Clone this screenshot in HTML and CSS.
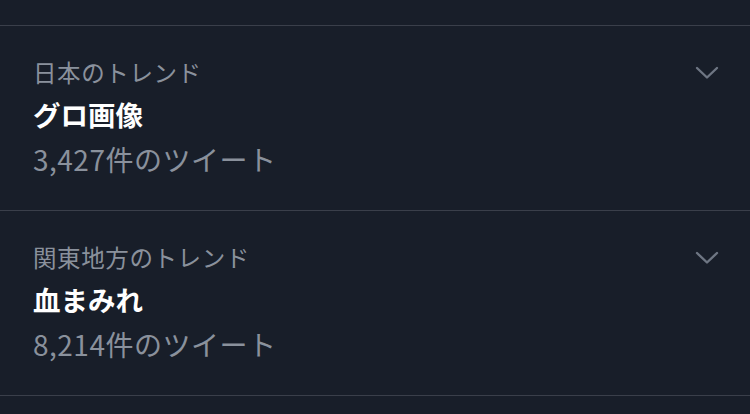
FILE: index.html
```html
<!DOCTYPE html>
<html lang="ja">
<head>
  <meta charset="UTF-8" />
  <meta name="viewport" content="width=device-width, initial-scale=1.0"/>
  <title>トレンド</title>
  <link rel="stylesheet" href="styles.css">
</head>
<body>

<div class="list">
  <div class="top-strip"></div>

  <!-- trend item -->
  <div class="trend">
    <div class="trend-text">
      <div class="trend-label">日本のトレンド</div>
      <div class="trend-title">グロ画像</div>
      <div class="trend-count">3,427件のツイート</div>
    </div>
    <svg class="chevron" width="24" height="14" viewBox="0 0 24 14">
      <polyline points="2,2 12,11.5 22,2" fill="none" stroke="#6e7683" stroke-width="2.4" stroke-linecap="round" stroke-linejoin="round"/>
    </svg>
  </div>

  <!-- trend item -->
  <div class="trend">
    <div class="trend-text">
      <div class="trend-label">関東地方のトレンド</div>
      <div class="trend-title">血まみれ</div>
      <div class="trend-count">8,214件のツイート</div>
    </div>
    <svg class="chevron" width="24" height="14" viewBox="0 0 24 14">
      <polyline points="2,2 12,11.5 22,2" fill="none" stroke="#6e7683" stroke-width="2.4" stroke-linecap="round" stroke-linejoin="round"/>
    </svg>
  </div>

  <div class="bottom-strip"></div>
</div>

</body>
</html>
```

FILE: styles.css
```css
body { margin: 0; padding: 0; background: #181e29; font-family: "Noto Sans CJK JP", "Noto Sans", sans-serif; color: #fff; }
.list { width: 750px; }
.top-strip { height: 25px; border-bottom: 1px solid #3a3f4a; }
.trend { display: flex; justify-content: space-between; align-items: flex-start; padding: 31px 31px 31px 33px; border-bottom: 1px solid #3a3f4a; }
.trend-text { display: flex; flex-direction: column; }
.trend-label { font-size: 23.5px; line-height: 30px; color: #8a919c; letter-spacing: 0.6px; }
.trend-title { font-size: 27.5px; line-height: 40px; font-weight: bold; margin-top: 7px; }
.trend-count { font-size: 28px; line-height: 40px; color: #8a919c; margin-top: 5px; letter-spacing: 0.5px; }
.chevron { margin-top: 9px; }
.bottom-strip { height: 20px; }
```
